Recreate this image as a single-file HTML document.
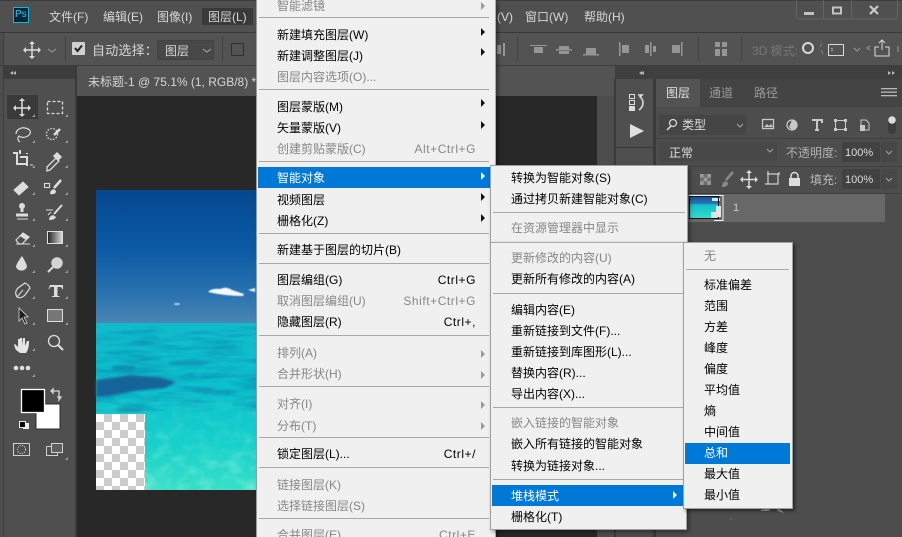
<!DOCTYPE html>
<html><head><meta charset="utf-8">
<style>
html,body{margin:0;padding:0}
#r{position:relative;width:902px;height:537px;overflow:hidden;background:#4d4d4d;font:12px/18px "Liberation Sans","Noto Sans CJK SC",sans-serif;color:#d6d6d6}
#r div,#r span{position:absolute;white-space:nowrap}
.mn{background:#f0f0f0}
.t{color:#000;height:18px;margin-top:1px}
.t.d{color:#878787}
.t.w{color:#fff}
.k{letter-spacing:.55px;text-align:right}
.s{height:1px;background:#a8a8a8}
.l{color:#d6d6d6}
.n{font-size:11px}
svg{position:absolute;left:0;top:0;overflow:visible}
</style></head><body>
<div id="r">
<!-- chrome -->
<div style="left:0;top:0;width:902px;height:32px;background:#505050"></div>
<div style="left:0;top:0;width:902px;height:1px;background:#3c3c3c"></div>
<div style="left:0;top:32px;width:902px;height:1px;background:#393939"></div>
<div style="left:3px;top:33px;width:899px;height:32px;background:#535353"></div>
<div style="left:3px;top:33px;width:1px;height:504px;background:#3e3e3e"></div>
<div style="left:0;top:65px;width:902px;height:1px;background:#3e3e3e"></div>
<!-- left tools -->
<div style="left:4px;top:66px;width:71px;height:471px;background:#4f4f4f"></div>
<div style="left:4px;top:66px;width:71px;height:13px;background:#3d3d3d"></div>
<div style="left:75px;top:66px;width:2px;height:471px;background:#3a3a3a"></div>
<div style="left:7px;top:95px;width:31px;height:24px;background:#3a3a3a"></div>
<!-- doc -->
<div style="left:77px;top:66px;width:538px;height:30px;background:#535353"></div>
<div style="left:77px;top:96px;width:520px;height:441px;background:#282828"></div>
<div style="left:597px;top:96px;width:18px;height:441px;background:#4d4d4d"></div>
<div style="left:88px;top:73px" class="l">未标题-1 @ 75.1% (1, RGB/8) *</div>
<!-- image -->
<svg width="902" height="537">
<defs>
<linearGradient id="sky" x1="0" y1="0" x2="0" y2="1"><stop offset="0" stop-color="#04478f"/><stop offset=".45" stop-color="#0c5aa6"/><stop offset=".8" stop-color="#2c74b0"/><stop offset="1" stop-color="#4a86b4"/></linearGradient>
<linearGradient id="sea" x1="0" y1="0" x2="0" y2="1"><stop offset="0" stop-color="#10bccb"/><stop offset=".4" stop-color="#0cc0cc"/><stop offset=".7" stop-color="#14cfcb"/><stop offset="1" stop-color="#38dfc8"/></linearGradient>
<linearGradient id="tg"><stop offset="0" stop-color="#222"/><stop offset="1" stop-color="#ddd"/></linearGradient>
<linearGradient id="mg" x1="0" y1="0" x2="0" y2="1"><stop offset="0" stop-color="#000"/><stop offset=".5" stop-color="#888"/><stop offset="1" stop-color="#fff"/></linearGradient>
<mask id="mk" maskUnits="userSpaceOnUse" x="96" y="380" width="165" height="110"><rect x="96" y="380" width="165" height="110" fill="url(#mg)"/></mask>
<pattern id="ck" x="96" y="414" width="16" height="16" patternUnits="userSpaceOnUse"><rect width="16" height="16" fill="#fff"/><rect x="8" width="8" height="8" fill="#ccc"/><rect y="8" width="8" height="8" fill="#ccc"/></pattern>
<filter id="bl"><feGaussianBlur stdDeviation="1.2"/></filter>
<filter id="bl2"><feGaussianBlur stdDeviation=".5"/></filter>
<filter id="wd" x="0" y="0" width="1" height="1" color-interpolation-filters="sRGB"><feTurbulence type="fractalNoise" baseFrequency=".025 .16" numOctaves="3" seed="4"/><feColorMatrix values="0 0 0 0 .03 0 0 0 0 .5 0 0 0 0 .68 2.2 0 0 0 -.85"/></filter>
<filter id="wl" x="0" y="0" width="1" height="1" color-interpolation-filters="sRGB"><feTurbulence type="fractalNoise" baseFrequency=".07 .1" numOctaves="2" seed="9"/><feColorMatrix values="0 0 0 0 .7 0 0 0 0 1 0 0 0 0 .92 2 0 0 0 -.8"/></filter>
</defs>
<rect x="96" y="190" width="165" height="133" fill="url(#sky)"/>
<rect x="96" y="323" width="165" height="167" fill="url(#sea)"/>
<rect x="96" y="326" width="165" height="85" filter="url(#wd)" opacity=".55"/>
<g mask="url(#mk)"><rect x="96" y="380" width="165" height="110" filter="url(#wl)" opacity=".4"/></g>
<g filter="url(#bl)">
<path d="M96 380 L130 375 L158 377 L176 382 L165 388 L135 391 L110 396 L96 397Z" fill="#12649a"/>
<ellipse cx="124" cy="368" rx="13" ry="3" fill="#0f8db2"/>
<ellipse cx="188" cy="363" rx="20" ry="2.5" fill="#0f96b8"/>
<ellipse cx="204" cy="390" rx="11" ry="2.500" fill="#0e9ab6"/>
<ellipse cx="130" cy="410" rx="14" ry="2" fill="#0d96ac"/>
<ellipse cx="190" cy="375" rx="6" ry="1.500" fill="#0f96b8"/>
</g>
<g filter="url(#bl2)">
<path d="M208 292 Q212 288 220 289 Q226 286 232 290 L244 294 L243 296 Q225 296 208 292Z" fill="#f4f8fc"/>
<path d="M248 290 L255 288 L255 292 Z" fill="#eef4fa"/>
<ellipse cx="177" cy="304" rx="3" ry="1" fill="#bcd4ea"/>
</g>
<rect x="96" y="414" width="49" height="76" fill="url(#ck)"/>

<!-- tool icons -->
<g fill="none" stroke="#dcdcdc" stroke-width="1.5">
<path d="M32 43v14M25 50h14" /><path d="M32 41l-3 3h6zM32 59l-3-3h6zM23 50l3-3v6zM41 50l-3-3v6z" fill="#dcdcdc" stroke="none"/>
<path d="M48 49l4 3 4-3" stroke="#9a9a9a" stroke-width="1"/>
<path d="M22 101v13M15 108h14" /><path d="M22 98l-3 3h6zM22 117l-3-3h6zM13 108l3-3v6zM31 108l-3-3v6z" fill="#dcdcdc" stroke="none"/>
<rect x="47.500" y="101.500" width="15" height="12" stroke-dasharray="3 2" stroke-width="1.300"/>
<path d="M16 134c0-4 5-7 9-6 5 1 7 4 4 7-3 3-8 3-10 1-2 2-1 5 1 6" stroke-width="1.200"/>
<circle cx="52" cy="134" r="5.500" stroke-dasharray="1.500 1.500" stroke-width="1.300"/>
<path d="M60 129l-6 6" stroke-width="2.500"/>
<path d="M13 153h4v11h11M20 150v4M20 157h7v9M27 154v-1" stroke-width="2"/>
<path d="M30 165h3" stroke-width="1"/>
<path d="M47 167l9-9 3 3-9 9-3 1z" stroke-width="1.300"/>
<path d="M54 156l3-3 4 4-3 3z" fill="#dcdcdc"/>
<path d="M14 190l9-8 5 5-9 8z" fill="#dcdcdc" stroke-width="1"/>
<rect x="44.500" y="183.500" width="5" height="4" stroke-width="1.100"/>
<path d="M61 180l-7 8" stroke-width="2.500"/>
<path d="M50 194q0-4 4-5l2 2q0 4-6 3z" fill="#dcdcdc" stroke="none"/>
<path d="M22 204v8M16 215h12" stroke-width="3"/><circle cx="22" cy="206" r="3" fill="#dcdcdc" stroke="none"/>
<path d="M17 219h11" stroke-width="1"/>
<path d="M62 205l-8 9" stroke-width="2"/><path d="M49 220q0-4 4-5l3 2q-1 3-7 3z" fill="#dcdcdc" stroke="none"/><path d="M46 210h7M48 215l3-3" stroke-width="1"/>
<path d="M16 240l7-7 6 4-7 7h-3z" stroke-width="1.200"/><path d="M20 236l3-3 6 4-3 3z" fill="#dcdcdc" stroke="none"/><path d="M16 244h14" stroke-width="1"/>
<path d="M22 256q-6 8-6 11a6 6 0 0 0 11 0q0-3-5-11z" fill="#dcdcdc" stroke="none"/>
<circle cx="57" cy="263" r="5" fill="#d4d4d4" stroke="#d4d4d4"/><path d="M53 267l-5 5" stroke-width="2"/>
<path d="M17 297q-3-5 1-9l7-5q4 2 5 5l-5 7q-4 4-8 2z" stroke-width="1.200"/><path d="M17 297l6-7" stroke-width="1"/>
<path d="M19 308l9 9-4 0 3 6-2 1-3-6-3 3z" fill="#1e1e1e" stroke="#dcdcdc" stroke-width=".8"/>
<circle cx="54" cy="341" r="5.500" stroke-width="1.300"/><path d="M58 345l5 5" stroke-width="2.200"/>
</g>
<rect x="47.500" y="231.500" width="15" height="12" fill="url(#tg)" stroke="#e0e0e0"/>
<rect x="47.500" y="309.500" width="15" height="12" fill="#777" stroke="#dcdcdc"/>
<path d="M50 285h13v4h-1q0-2-2-2h-2.500v9h2v1h-7.500v-1h2v-9h-2.500q-2 0-2 2h-1z" fill="#dcdcdc"/>
<path d="M16 350q-3-6-1-6l3 3v-8h2v6l0-7h2v7l1-7h2v8l2-5h2q0 5-1 8t-2 4h-6z" fill="#e4e4e4"/>
<g fill="#dcdcdc"><circle cx="16" cy="368" r="2.300"/><circle cx="22" cy="368" r="2.300"/><circle cx="28" cy="368" r="2.300"/></g>
<g fill="#9b9b9b"><path d="M32 117h3v-3zM65 117h3v-3zM32 143h3v-3zM65 143h3v-3zM32 168h3v-3zM65 168h3v-3zM32 195h3v-3zM65 195h3v-3zM32 221h3v-3zM65 221h3v-3zM32 247h3v-3zM65 247h3v-3zM32 273h3v-3zM65 273h3v-3zM32 299h3v-3zM65 299h3v-3zM32 325h3v-3zM65 325h3v-3zM32 351h3v-3zM32 377h3v-3zM65 460h3v-3z"/></g>
<path d="M13 71l-3 2 3 2zM16 71l-3 2 3 2z" fill="#b5b5b5"/>
<!-- colours -->
<rect x="36" y="404" width="24" height="25" fill="#fff" stroke="#2e2e2e"/>
<rect x="21.500" y="389.500" width="23" height="23" fill="#000" stroke="#fff" stroke-width="1.300"/>
<rect x="23" y="423" width="6" height="6" fill="#eee"/><rect x="19.500" y="421.500" width="6" height="6" fill="#000" stroke="#eee"/>
<path d="M53 391h6v6M59 397l-2 0h4l-2 3zM53 391v-2l-2 2 2 2z" fill="none" stroke="#d8d8d8" stroke-width="1.300"/>
<rect x="13.500" y="443.500" width="16" height="12" fill="none" stroke="#cfcfcf"/><circle cx="21.500" cy="449.500" r="4" fill="none" stroke="#cfcfcf" stroke-dasharray="1.200 1.200"/>
<path d="M46.500 446.500h8M46.500 446.500v9h11v-3" fill="none" stroke="#cfcfcf"/><rect x="51.500" y="443.500" width="11" height="9" fill="#5e5e5e" stroke="#cfcfcf"/>

<!-- options bar -->
<rect x="72" y="42" width="13" height="13" fill="#d0d0d0" rx="1"/>
<path d="M75 48l2.500 3 4.500-5.500" fill="none" stroke="#222" stroke-width="2"/>
<rect x="157.500" y="40.500" width="56" height="19" fill="#484848" stroke="#424242"/>
<path d="M203 49l4 3 4-3" fill="none" stroke="#a8a8a8"/>
<rect x="231.500" y="43.500" width="12" height="12" fill="none" stroke="#2f2f2f" rx="1"/>
<g fill="#404040"><rect x="65" y="37" width="1" height="24"/><rect x="222" y="37" width="1" height="24"/><rect x="517" y="37" width="1" height="24"/><rect x="698" y="37" width="1" height="24"/><rect x="741" y="37" width="1" height="24"/></g>
<g fill="#959595">
<path d="M497 45h4v9h-4zM503 43h2v13h-2z"/>
<path d="M530 45h17v1h-17zM534 47h9v6h-9zM530 54h0zM534 52h9v1h-9z"/>
<path d="M556 49h16v1.500h-16zM559 46h10v3h-10zM559 51h10v3h-10zM583 54h16v1.500h-16zM586 48h10v6h-10z"/>
<path d="M619 42h1.500v14h-1.500zM622 45h7v8h-7zM650 42h1.500v14h-1.500zM645 45h4v8h-4zM653 46h3v6h-3zM681 42h1.500v14h-1.500zM672 45h8v8h-8z"/>
<path d="M715 42h5v5h-5zM722 42h5v5h-5zM715 49h5v7h-5zM722 49h5v7h-5z"/>
</g>
<g fill="none" stroke="#d8d8d8" stroke-width="1.300">
<circle cx="808" cy="48" r="5" stroke-width="2"/>
<path d="M822 43l-2 4M821 50l2 4" stroke="#777"/>
<rect x="828.500" y="44.500" width="15" height="11" stroke-width="1"/><path d="M832 48v4" stroke-dasharray="1 1"/>
<path d="M854 48l3 3 3-3" stroke="#999" stroke-width="1"/>
<path d="M870 46l-3 2 3 2" stroke="#999" stroke-width="1"/>
<path d="M879 47h-4v9h14v-9h-4M882 50v-10M879 43l3-3 3 3" stroke-width="1"/>
<path d="M898 46v6" stroke="#888"/>
</g>
<!-- window controls -->
<path d="M796.500 0v16q0 3 3 3h95q3 0 3-3v-16M823.500 0v19M851.500 0v19" fill="none" stroke="#646464"/>
<rect x="804" y="12" width="10" height="3" fill="#c2c2c2"/>
<rect x="833" y="7.500" width="8" height="6" fill="none" stroke="#c2c2c2" stroke-width="2"/>
<path d="M870 6l8 8M878 6l-8 8" stroke="#cacaca" stroke-width="2.200"/>
<!-- PS logo -->
<rect x="13.500" y="7.500" width="15" height="15" fill="#04263a" stroke="#17b4d8" stroke-width="1"/>
</svg>
<div style="left:15px;top:8px;font-size:10px;line-height:14px;color:#31c5f0">Ps</div>
<!-- menu bar -->
<div style="left:202px;top:8px;width:51px;height:17px;background:#393939"></div>
<div style="left:49px;top:8px" class="l">文件(F)</div>
<div style="left:103px;top:8px" class="l">编辑(E)</div>
<div style="left:157px;top:8px" class="l">图像(I)</div>
<div style="left:208px;top:8px" class="l">图层(L)</div>
<div style="left:497px;top:8px" class="l">(V)</div>
<div style="left:525px;top:8px" class="l">窗口(W)</div>
<div style="left:584px;top:8px" class="l">帮助(H)</div>
<div style="left:92px;top:42px;font-size:13px;letter-spacing:.2px" class="l">自动选择：</div>
<div style="left:165px;top:42px" class="l">图层</div>
<div style="left:752px;top:42px;color:#767676">3D 模式:</div>

<!-- right panels -->
<div style="left:615px;top:66px;width:287px;height:13px;background:#3f3f3f"></div>
<div style="left:616px;top:79px;width:37px;height:90px;background:#4f4f4f"></div>
<div style="left:616px;top:147px;width:37px;height:1px;background:#393939"></div>
<div style="left:614px;top:79px;width:2px;height:458px;background:#3a3a3a"></div>
<div style="left:653px;top:79px;width:3px;height:458px;background:#3a3a3a"></div>
<div style="left:656px;top:79px;width:246px;height:28px;background:#444"></div>
<div style="left:656px;top:79px;width:44px;height:28px;background:#535353"></div>
<div style="left:656px;top:107px;width:246px;height:430px;background:#4d4d4d"></div>
<div style="left:656px;top:138px;width:246px;height:1px;background:#3f3f3f"></div>
<div style="left:656px;top:166px;width:246px;height:1px;background:#3f3f3f"></div>
<div style="left:656px;top:193px;width:246px;height:1px;background:#3f3f3f"></div>
<div style="left:659px;top:115px;width:87px;height:20px;background:#454545"></div>
<div style="left:659px;top:142px;width:118px;height:20px;background:#484848"></div>
<div style="left:842px;top:142px;width:38px;height:20px;background:#414141"></div>
<div style="left:881px;top:142px;width:16px;height:20px;background:#474747"></div>
<div style="left:842px;top:169px;width:38px;height:20px;background:#414141"></div>
<div style="left:881px;top:169px;width:16px;height:20px;background:#474747"></div>
<div style="left:688px;top:194px;width:197px;height:28px;background:#686868"></div>
<div style="left:666px;top:84px;color:#e0e0e0">图层</div>
<div style="left:709px;top:84px;color:#999">通道</div>
<div style="left:754px;top:84px;color:#999">路径</div>
<div style="left:682px;top:116px;color:#dcdcdc">类型</div>
<div style="left:669px;top:144px;color:#dcdcdc">正常</div>
<div style="left:786px;top:144px;color:#b0b0b0">不透明度:</div>
<div style="left:845px;top:144px;color:#dcdcdc" class="n">100%</div>
<div style="left:810px;top:171px;color:#b8b8b8">填充:</div>
<div style="left:845px;top:171px;color:#dcdcdc" class="n">100%</div>
<div style="left:733px;top:199px;color:#c8c8c8;font-size:11px">1</div>
<svg width="902" height="537">
<defs><linearGradient id="th" x1="0" y1="0" x2="0" y2="1"><stop offset="0" stop-color="#0a4f9e"/><stop offset=".35" stop-color="#2b78b4"/><stop offset=".4" stop-color="#0fc0cc"/><stop offset="1" stop-color="#34dcc8"/></linearGradient></defs>
<path d="M646 71l-3 2 3 2zM644 71l-3 2 3 2z" fill="#b5b5b5" transform="translate(-2 0)"/>
<path d="M888 71l3 2-3 2zM892 71l3 2-3 2z" fill="#b5b5b5"/>
<g fill="#dcdcdc">
<rect x="629.500" y="94.500" width="5" height="4" fill="none" stroke="#dcdcdc"/><rect x="629.500" y="100.500" width="5" height="4" fill="none" stroke="#dcdcdc"/><rect x="629" y="106" width="6" height="5"/>
<path d="M630 124v14l14-7z" fill="#e0e0e0"/>
</g>
<path d="M638 95h4l-2 2q3 2 3 6t-4 7" fill="none" stroke="#dcdcdc" stroke-width="1.600"/>
<g fill="#b8b8b8"><rect x="881" y="88" width="16" height="1.300"/><rect x="881" y="91.500" width="16" height="1.300"/><rect x="881" y="95" width="16" height="1.300"/></g>
<circle cx="673" cy="123" r="3.500" fill="none" stroke="#dcdcdc" stroke-width="1.200"/><path d="M671 126l-4 4" stroke="#dcdcdc" stroke-width="1.500"/>
<g fill="none" stroke="#a4a4a4"><path d="M737 124l3 3 3-3M767 149l3 3 3-3M886 151l3 3 3-3M886 178l3 3 3-3"/></g>
<g fill="none" stroke="#c8c8c8" stroke-width="1.300">
<rect x="762.500" y="119.500" width="11" height="9"/><path d="M764 127l3-3 2 2 2-2 2 3z" fill="#c8c8c8" stroke="none"/>
<circle cx="792" cy="125" r="5" /><path d="M792 120a5 5 0 0 1 0 10l-3-3z" fill="#c8c8c8" stroke="none"/>
<path d="M812 120h10v3M817 120v10M815 130h4" stroke-width="2"/>
<rect x="835.500" y="120.500" width="10" height="9" stroke-width="1"/>
<path d="M861 120h5l3 3v7h-8z" stroke-width="1"/>
</g>
<g fill="#c8c8c8"><rect x="834" y="119" width="3" height="3"/><rect x="844" y="119" width="3" height="3"/><rect x="834" y="128" width="3" height="3"/><rect x="844" y="128" width="3" height="3"/><rect x="860" y="125" width="5" height="6"/></g>
<rect x="888" y="116" width="8" height="18" rx="4" fill="#3d3d3d"/><circle cx="892" cy="120" r="3.800" fill="#dcdcdc"/>
<!-- lock row -->
<rect x="700" y="174" width="11" height="11" fill="#6e6e6e"/>
<path d="M700 174h3.600v3.600h-3.600zM707.300 174h3.600v3.600h-3.600zM703.700 177.700h3.600v3.600h-3.600zM700 181.300h3.600v3.600h-3.600zM707.300 181.300h3.600v3.600h-3.600z" fill="#9a9a9a"/>
<path d="M733 172l-7 8" stroke="#8a8a8a" stroke-width="2.500"/><path d="M722 187q0-5 4-6l2 2q0 4-6 4z" fill="#8a8a8a"/>
<path d="M749 172v15M742 179.500h15" stroke="#dcdcdc" stroke-width="1.500"/><path d="M749 170l-3 3h6zM749 189l-3-3h6zM740 179.500l3-3v6zM758 179.500l-3-3v6z" fill="#dcdcdc"/>
<path d="M767 174h11v10h-10v-13M765 184h13M779 172v3" fill="none" stroke="#d0d0d0" stroke-width="1.200"/>
<rect x="789" y="178" width="11" height="8" fill="#dcdcdc"/><path d="M791 178v-2a3.500 3.500 0 0 1 7 0v2" fill="none" stroke="#dcdcdc" stroke-width="1.500"/>
<!-- thumbnail -->
<rect x="689" y="196" width="31" height="22" fill="url(#th)"/>
<path d="M712 198h8v3h-8z" fill="#d8e4ee"/>
<path d="M689 195.500h34v25h-9" fill="none" stroke="#f2f2f2"/>
<rect x="689.500" y="196.500" width="29" height="22" fill="none" stroke="#111"/>
<path d="M716 206h5v11h-4v-3h-1z" fill="#e6e6e6"/>
<rect x="711" y="212" width="6" height="6" fill="#e0e0e0"/>
<!-- watermark -->
<path d="M760 511q5-4 10-2l-1 2zM776 508q4 1 8 5l-6-2z" fill="#a8a8a8"/>
<rect x="730" y="518" width="2" height="2" fill="#5f5f5f"/>
</svg>

<!-- MENU 1 -->
<div class="mn" style="left:256px;top:0;width:239px;height:537px;box-shadow:1px 0 0 #aaa,3px 2px 4px rgba(0,0,0,.45);border-left:1px solid #9a9a9a;box-sizing:border-box"></div>
<div style="left:258px;top:167px;width:232px;height:21px;background:#0078d7"></div>
<div class="s" style="left:259px;top:17px;width:230px"></div>
<div class="s" style="left:259px;top:89px;width:230px"></div>
<div class="s" style="left:259px;top:161px;width:230px"></div>
<div class="s" style="left:259px;top:233px;width:230px"></div>
<div class="s" style="left:259px;top:263px;width:230px"></div>
<div class="s" style="left:259px;top:335px;width:230px"></div>
<div class="s" style="left:259px;top:386px;width:230px"></div>
<div class="s" style="left:259px;top:437px;width:230px"></div>
<div class="s" style="left:259px;top:467px;width:230px"></div>
<div class="s" style="left:259px;top:518px;width:230px"></div>
<div class="t d" style="left:277px;top:-4px">智能滤镜</div>
<div class="t" style="left:277px;top:25px">新建填充图层(W)</div>
<div class="t" style="left:277px;top:46px">新建调整图层(J)</div>
<div class="t d" style="left:277px;top:67px">图层内容选项(O)...</div>
<div class="t" style="left:277px;top:97px">图层蒙版(M)</div>
<div class="t" style="left:277px;top:118px">矢量蒙版(V)</div>
<div class="t d" style="left:277px;top:139px">创建剪贴蒙版(C)</div>
<div class="t d k" style="right:426px;top:139px">Alt+Ctrl+G</div>
<div class="t w" style="left:277px;top:168px">智能对象</div>
<div class="t" style="left:277px;top:190px">视频图层</div>
<div class="t" style="left:277px;top:211px">栅格化(Z)</div>
<div class="t" style="left:277px;top:240px">新建基于图层的切片(B)</div>
<div class="t" style="left:277px;top:270px">图层编组(G)</div>
<div class="t k" style="right:426px;top:270px">Ctrl+G</div>
<div class="t d" style="left:277px;top:291px">取消图层编组(U)</div>
<div class="t d k" style="right:426px;top:291px">Shift+Ctrl+G</div>
<div class="t" style="left:277px;top:312px">隐藏图层(R)</div>
<div class="t k" style="right:426px;top:312px">Ctrl+,</div>
<div class="t d" style="left:277px;top:343px">排列(A)</div>
<div class="t d" style="left:277px;top:364px">合并形状(H)</div>
<div class="t d" style="left:277px;top:394px">对齐(I)</div>
<div class="t d" style="left:277px;top:416px">分布(T)</div>
<div class="t" style="left:277px;top:444px">锁定图层(L)...</div>
<div class="t k" style="right:426px;top:444px">Ctrl+/</div>
<div class="t d" style="left:277px;top:475px">链接图层(K)</div>
<div class="t d" style="left:277px;top:496px">选择链接图层(S)</div>
<div class="t d" style="left:277px;top:525px">合并图层(E)</div>
<div class="t d k" style="right:426px;top:525px">Ctrl+E</div>

<!-- MENU 2 -->
<div class="mn" style="left:490px;top:165px;width:198px;height:77px;border:1px solid #a0a0a0;border-bottom:0;box-sizing:border-box;box-shadow:2px 2px 4px rgba(0,0,0,.4)"></div>
<div class="mn" style="left:490px;top:242px;width:197px;height:288px;border:1px solid #a0a0a0;box-sizing:border-box;box-shadow:2px 2px 4px rgba(0,0,0,.4)"></div>
<div style="left:492px;top:485px;width:192px;height:21px;background:#0078d7"></div>
<div class="s" style="left:493px;top:212px;width:192px"></div>
<div class="s" style="left:493px;top:242px;width:192px"></div>
<div class="s" style="left:493px;top:293px;width:190px"></div>
<div class="s" style="left:493px;top:407px;width:190px"></div>
<div class="s" style="left:493px;top:479px;width:190px"></div>
<div class="t" style="left:511px;top:168px">转换为智能对象(S)</div>
<div class="t" style="left:511px;top:189px">通过拷贝新建智能对象(C)</div>
<div class="t d" style="left:511px;top:218px">在资源管理器中显示</div>
<div class="t d" style="left:511px;top:248px">更新修改的内容(U)</div>
<div class="t" style="left:511px;top:269px">更新所有修改的内容(A)</div>
<div class="t" style="left:511px;top:300px">编辑内容(E)</div>
<div class="t" style="left:511px;top:321px">重新链接到文件(F)...</div>
<div class="t" style="left:511px;top:342px">重新链接到库图形(L)...</div>
<div class="t" style="left:511px;top:363px">替换内容(R)...</div>
<div class="t" style="left:511px;top:384px">导出内容(X)...</div>
<div class="t d" style="left:511px;top:413px">嵌入链接的智能对象</div>
<div class="t" style="left:511px;top:434px">嵌入所有链接的智能对象</div>
<div class="t" style="left:511px;top:456px">转换为链接对象...</div>
<div class="t w" style="left:511px;top:486px">堆栈模式</div>
<div class="t" style="left:511px;top:507px">栅格化(T)</div>

<!-- MENU 3 -->
<div class="mn" style="left:683px;top:242px;width:110px;height:267px;border:1px solid #a0a0a0;box-sizing:border-box;box-shadow:2px 2px 3px rgba(0,0,0,.5)"></div>
<div style="left:685px;top:443px;width:105px;height:21px;background:#0078d7"></div>
<div class="s" style="left:686px;top:269px;width:103px"></div>
<div class="t d" style="left:704px;top:246px">无</div>
<div class="t" style="left:704px;top:275px">标准偏差</div>
<div class="t" style="left:704px;top:296px">范围</div>
<div class="t" style="left:704px;top:317px">方差</div>
<div class="t" style="left:704px;top:338px">峰度</div>
<div class="t" style="left:704px;top:359px">偏度</div>
<div class="t" style="left:704px;top:380px">平均值</div>
<div class="t" style="left:704px;top:401px">熵</div>
<div class="t" style="left:704px;top:422px">中间值</div>
<div class="t w" style="left:704px;top:443px">总和</div>
<div class="t" style="left:704px;top:464px">最大值</div>
<div class="t" style="left:704px;top:485px">最小值</div>

<!-- menu arrows -->
<svg width="902" height="537">
<g fill="#9a9a9a"><path d="M481 2v8l4-4zM481 350v8l4-4zM481 371v8l4-4zM481 401v8l4-4zM481 422v8l4-4z"/></g>
<g fill="#111"><path d="M481 28v8l4-4zM481 48v8l4-4zM481 99v8l4-4zM481 121v8l4-4zM481 193v8l4-4zM481 214v8l4-4z"/></g>
<g fill="#fff"><path d="M481 172v8l4-4zM673 491v8l4-4z"/></g>
</svg>
</div>
</body></html>
